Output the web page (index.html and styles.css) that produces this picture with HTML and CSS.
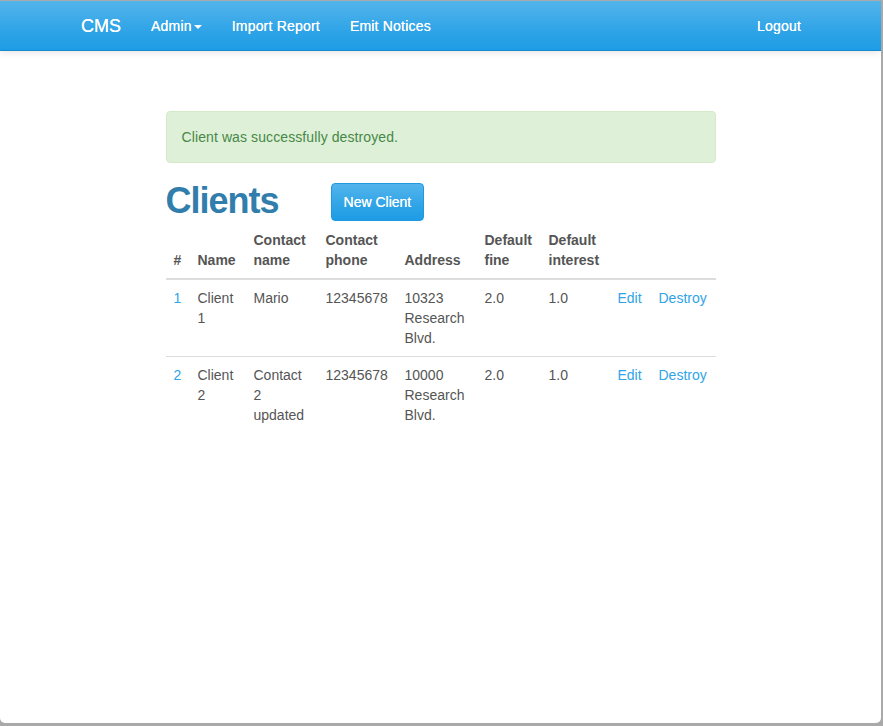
FILE: index.html
```html
<!DOCTYPE html>
<html>
<head>
<meta charset="utf-8">
<title>CMS - Clients</title>
<link rel="stylesheet" href="styles.css">
</head>
<body>
<div class="window">
  <nav class="navbar">
    <div class="nav-inner">
      <a class="brand" href="#">CMS</a>
      <a class="nav-link" href="#">Admin<span class="caret"></span></a>
      <a class="nav-link" href="#">Import Report</a>
      <a class="nav-link" href="#">Emit Notices</a>
      <a class="nav-link logout" href="#">Logout</a>
    </div>
  </nav>
  <main class="content">
    <div class="alert">Client was successfully destroyed.</div>
    <div class="title-row">
      <h1>Clients</h1>
      <a class="btn" href="#">New Client</a>
    </div>
    <table class="clients">
      <colgroup>
        <col class="c1"><col class="c2"><col class="c3"><col class="c4"><col class="c5"><col class="c6"><col class="c7"><col class="c8"><col class="c9">
      </colgroup>
      <thead>
        <tr>
          <th>#</th>
          <th>Name</th>
          <th>Contact name</th>
          <th>Contact phone</th>
          <th>Address</th>
          <th>Default fine</th>
          <th>Default interest</th>
          <th></th>
          <th></th>
        </tr>
      </thead>
      <tbody>
        <tr>
          <td><a href="#">1</a></td>
          <td>Client 1</td>
          <td>Mario</td>
          <td>12345678</td>
          <td>10323 Research Blvd.</td>
          <td>2.0</td>
          <td>1.0</td>
          <td><a href="#">Edit</a></td>
          <td><a href="#">Destroy</a></td>
        </tr>
        <tr>
          <td><a href="#">2</a></td>
          <td>Client 2</td>
          <td>Contact 2 updated</td>
          <td>12345678</td>
          <td>10000 Research Blvd.</td>
          <td>2.0</td>
          <td>1.0</td>
          <td><a href="#">Edit</a></td>
          <td><a href="#">Destroy</a></td>
        </tr>
      </tbody>
    </table>
  </main>
</div>
</body>
</html>
```
FILE: styles.css
```css
html, body {
  margin: 0;
  padding: 0;
}
body {
  background: #a9a9a9;
  font-family: "Liberation Sans", Arial, sans-serif;
  font-size: 14px;
  line-height: 20px;
  color: #555;
  height: 726px;
  overflow: hidden;
}
.window {
  margin-top: 1px;
  width: 881px;
  height: 722px;
  background: #fff;
  border-radius: 0 0 5px 5px;
  overflow: hidden;
}
a {
  color: #2fa4e7;
  text-decoration: none;
}
.navbar {
  height: 49px;
  background: linear-gradient(#54b4eb, #2fa4e7 60%, #1d9ce5);
  border-bottom: 1px solid #178acc;
  box-shadow: 0 1px 8px rgba(0, 0, 0, 0.12);
  position: relative;
}
.nav-inner {
  width: 720px;
  margin: 0 auto;
  display: flex;
  align-items: center;
  height: 49px;
  padding-left: 1px;
}
.brand {
  color: #fff;
  font-size: 18px;
  line-height: 20px;
  padding-right: 15px;
  text-shadow: 0 0 0.4px #fff;
}
.nav-link {
  color: #fff;
  padding: 0 15px;
  line-height: 20px;
  letter-spacing: 0.2px;
  text-shadow: 0 0 0.4px #fff;
  display: flex;
  align-items: center;
}
.caret {
  display: inline-block;
  width: 0;
  height: 0;
  margin-left: 2px;
  margin-top: 2px;
  border-top: 4px solid #fff;
  border-left: 4px solid transparent;
  border-right: 4px solid transparent;
}
.logout {
  margin-left: auto;
  padding-right: 0;
}
.content {
  width: 550px;
  margin: 0 auto;
  padding-top: 60px;
}
.alert {
  background: #dff0d8;
  border: 1px solid #d6e9c6;
  color: #468847;
  border-radius: 4px;
  padding: 15px;
  line-height: 20px;
  letter-spacing: 0.1px;
}
.title-row {
  display: flex;
  align-items: flex-start;
  gap: 52px;
  margin-top: 20px;
  height: 38px;
}
h1 {
  margin: 0;
  font-size: 36px;
  line-height: 36px;
  font-weight: bold;
  letter-spacing: -1px;
  color: #317eac;
}
.btn {
  display: inline-block;
  color: #fff;
  background: linear-gradient(#54b4eb, #2fa4e7 60%, #1d9ce5);
  border: 1px solid #1f9ae0;
  border-radius: 4px;
  padding: 8px 12px;
  line-height: 20px;
  font-size: 14px;
  text-shadow: 0 0 0.4px #fff;
}
.clients {
  margin-top: 1px;
  width: 550px;
  border-collapse: collapse;
  table-layout: fixed;
}
.c1 { width: 24px; }
.c2 { width: 56px; }
.c3 { width: 72px; }
.c4 { width: 79px; }
.c5 { width: 80px; }
.c6 { width: 64px; }
.c7 { width: 69px; }
.c8 { width: 41px; }
.c9 { width: 65px; }
.clients th {
  text-align: left;
  vertical-align: bottom;
  padding: 8px;
  font-weight: bold;
  border-bottom: 2px solid #ddd;
}
.clients td {
  vertical-align: top;
  padding: 8px;
  border-top: 1px solid #ddd;
}
.clients tbody tr:first-child td {
  border-top: 0;
}
```
